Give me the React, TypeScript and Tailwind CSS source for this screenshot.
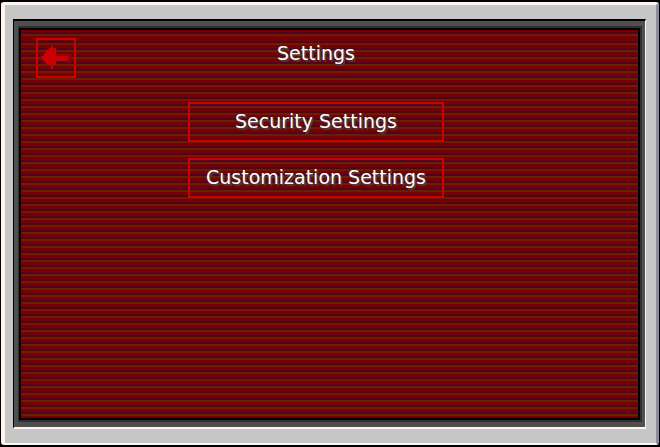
import React from "react";

const label =
  "font-['DejaVu_Sans',sans-serif] text-[19px] leading-6 text-white [text-shadow:2px_2px_0_#3f3f3f]";
const frame = "border-2 border-[#cc0000]";

function ArrowLeft() {
  return (
    <svg width="30" height="24" viewBox="0 0 30 24" shapeRendering="crispEdges" aria-hidden="true">
      <path fill="#960000" d="M15 8h15v9h-3v-2H15z" />
      <path
        fill="#cc0000"
        d="M10 0H12V2H15V10H27V15H15V19H12V23H10V20H8V18H5V16H3V14H1V12H0V10H3V7H5V4H8V2H10z"
      />
    </svg>
  );
}

function MenuButton({ children }: { children: React.ReactNode }) {
  return (
    <button className={`${frame} ${label} h-10 w-64 max-w-full whitespace-nowrap pb-[3px]`}>
      {children}
    </button>
  );
}

export default function App() {
  return (
    <div className="flex min-h-screen bg-black px-px py-[2px]">
      <div className="flex flex-1 rounded-[3px] border-t-[3px] border-r-[3px] border-b-2 border-l-4 border-t-[#fff4f0] border-r-[#8e8ca3] border-b-[#fff4f0] border-l-[#fff4f0] bg-[#c6c6c6] pt-[14px] pr-[10px] pb-[14px] pl-2">
        <div className="flex flex-1 border-t-2 border-r border-b-2 border-l border-t-black border-r-[#fff4f0] border-b-[#fff4f0] border-l-black">
          <div className="flex flex-1 border-t-[5px] border-r-[3px] border-b-[5px] border-l-4 border-[#505050] bg-[#303030] py-[2px] pr-[2px] pl-px">
            <main className="flex flex-1 flex-col border-2 border-black bg-[repeating-linear-gradient(to_bottom,#770000_0px,#770000_3px,#550022_3px,#550022_5px,#662200_5px,#662200_7px)] bg-origin-content pt-2 pr-[42px] pl-[15px]">
              <header className="grid grid-cols-[40px_1fr_40px] items-start">
                <button aria-label="Back" className={`${frame} flex h-10 w-10 items-center justify-center`}>
                  <ArrowLeft />
                </button>
                <h1 className={`${label} pt-[3px] text-center`}>Settings</h1>
              </header>
              <nav className="mt-6 flex flex-col items-center gap-4">
                <MenuButton>Security Settings</MenuButton>
                <MenuButton>Customization Settings</MenuButton>
              </nav>
            </main>
          </div>
        </div>
      </div>
    </div>
  );
}
